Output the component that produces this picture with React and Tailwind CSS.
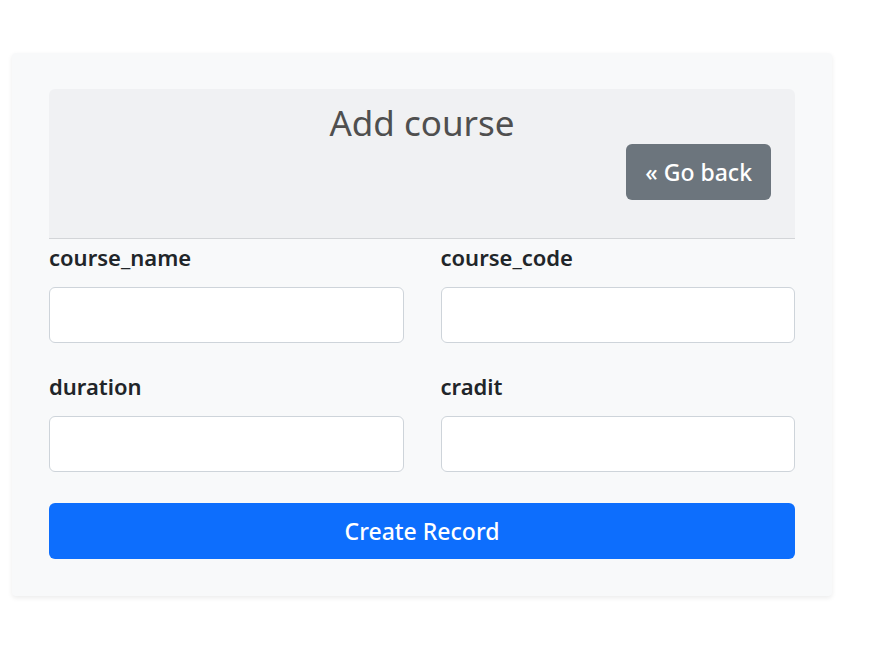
export default function App() {
  const fields = [
    ['course_name', 'course_code'],
    ['duration', 'cradit'],
  ];
  return (
    <div className="min-h-screen bg-white pt-[53px] pl-[12px]" style={{ fontFamily: '"Noto Sans", "Open Sans", sans-serif' }}>
      <div className="w-[820px] rounded bg-[#f8f9fa] px-[37px] pt-[36px] pb-[37px] shadow-[0_2px_5px_rgba(0,0,0,0.08)]">
        {/* Header */}
        <div className="rounded-t-md border-b border-[#d3d5d8] bg-[#f0f1f3] px-[24px] pt-[13px] pb-[38px]">
          <h1 className="text-center text-[35px] leading-[41px] font-normal text-[#4f4f4f]">Add course</h1>
          <div className="mt-[1px] flex justify-end">
            <button className="h-[56px] rounded-md bg-[#6c757d] px-[19px] text-[23px] font-medium text-white">
              « Go back
            </button>
          </div>
        </div>

        {/* Form */}
        <div className="grid grid-cols-2 gap-x-[37px]">
          {fields.map((row, i) => (
            <div key={i} className="contents">
              {row.map(name => (
                <div key={name} className={i === 0 ? 'pt-[4px]' : 'pt-[29px]'}>
                  <label className="block text-[22px] leading-[29px] font-semibold text-[#212529]">{name}</label>
                  <input className="mt-[15px] block h-[56px] w-full rounded-md border border-[#ced4da] bg-white px-4 outline-none" />
                </div>
              ))}
            </div>
          ))}
        </div>

        <button className="mt-[31px] h-[56px] w-full rounded-md bg-[#0d6efd] text-[23px] font-medium text-white">
          Create Record
        </button>
      </div>
    </div>
  );
}
